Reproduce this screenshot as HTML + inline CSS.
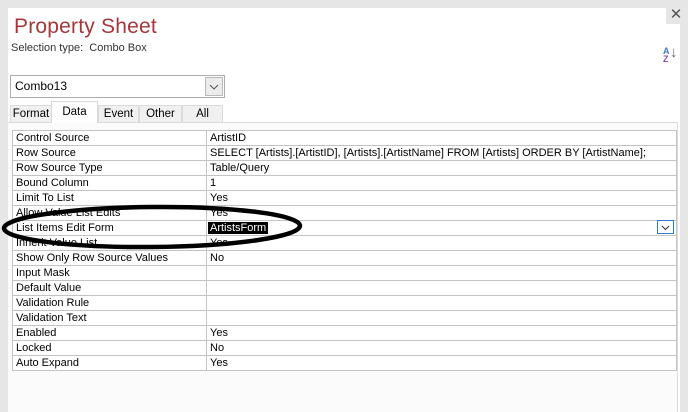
<!DOCTYPE html>
<html><head><meta charset="utf-8"><style>
*{margin:0;padding:0;box-sizing:border-box}
body{width:688px;height:412px;background:#e6e6e6;position:relative;overflow:hidden;font-family:"Liberation Sans",sans-serif;font-size:11px;color:#000}
.a{position:absolute}
#panel{left:8px;top:8px;width:672px;height:404px;background:#fff}
#close{left:666px;top:6px;width:20px;height:18px;background:#e6e6e6;font-size:15px;line-height:18px;text-align:center;color:#555}
.tab{position:absolute;top:105px;height:17px;background:#f0f0f0;border:1px solid #dadada;border-bottom:none;text-align:center;line-height:16px;font-size:11.5px}
#content{left:8px;top:122px;width:670px;height:290px;background:#fbfbfb;border-top:1px solid #dadada;border-right:1px solid #dcdcdc}
table{position:absolute;left:12px;top:130px;border-collapse:collapse;width:665px}
td{border:1px solid #c3c3c3;height:15px;padding:0 0 0 3px;line-height:13px;font-size:11px;white-space:nowrap;background:#fff}
td:first-child{width:194px}
</style></head><body>
<div id="panel" class="a"></div>
<div id="close" class="a">✕</div>
<div class="a" style="left:14px;top:15px;font-size:21px;color:#a4373a;letter-spacing:0.2px">Property Sheet</div>
<div class="a" style="left:11px;top:42px;font-size:11px;color:#333">Selection type:&nbsp; Combo Box</div>
<div class="a" style="left:663px;top:47px;font-size:9px;line-height:8px;font-weight:bold"><span style="color:#3f7ac7">A</span><br><span style="color:#8a4fb0">Z</span></div>
<div class="a" style="left:670px;top:44px;font-size:15px;color:#666">↓</div>
<div class="a" style="left:10px;top:75px;width:215px;height:23px;border:1px solid #acacac;background:#fff;padding-left:4px;line-height:20px;font-size:12px">Combo13</div>
<div class="a" style="left:205px;top:77px;width:18px;height:19px;background:#ececec;border:1px solid #b9b9b9"><svg width="16" height="17" viewBox="0 0 16 17"><path d="M4 7l4 4 4-4" stroke="#555" fill="none" stroke-width="1"/></svg></div>
<div id="content" class="a"></div>
<div class="tab" style="left:10px;width:42px">Format</div>
<div class="tab" style="left:98px;width:41px">Event</div>
<div class="tab" style="left:139px;width:43px">Other</div>
<div class="tab" style="left:182px;width:41px">All</div>
<div class="tab" style="left:51px;top:101px;height:22px;width:47px;background:#fff;line-height:20px;z-index:2">Data</div>
<table>
<tr><td>Control Source</td><td>ArtistID</td></tr>
<tr><td>Row Source</td><td>SELECT [Artists].[ArtistID], [Artists].[ArtistName] FROM [Artists] ORDER BY [ArtistName];</td></tr>
<tr><td>Row Source Type</td><td>Table/Query</td></tr>
<tr><td>Bound Column</td><td>1</td></tr>
<tr><td>Limit To List</td><td>Yes</td></tr>
<tr><td>Allow Value List Edits</td><td>Yes</td></tr>
<tr><td>List Items Edit Form</td><td style="padding-left:1px"><span style="background:#000;color:#fff;padding:0 2px">ArtistsForm</span></td></tr>
<tr><td>Inherit Value List</td><td>Yes</td></tr>
<tr><td>Show Only Row Source Values</td><td>No</td></tr>
<tr><td>Input Mask</td><td></td></tr>
<tr><td>Default Value</td><td></td></tr>
<tr><td>Validation Rule</td><td></td></tr>
<tr><td>Validation Text</td><td></td></tr>
<tr><td>Enabled</td><td>Yes</td></tr>
<tr><td>Locked</td><td>No</td></tr>
<tr><td>Auto Expand</td><td>Yes</td></tr>
</table>
<div class="a" style="left:657px;top:220px;width:17px;height:14px;border:1px solid #2b7bd6;background:#fff"><svg width="15" height="12" viewBox="0 0 15 12"><path d="M4 5l3.5 3.5L11 5" stroke="#333" fill="none" stroke-width="1"/></svg></div>
<svg class="a" style="left:0;top:0" width="688" height="412"><ellipse cx="152" cy="227" rx="148" ry="20" transform="rotate(-0.5 152 227)" fill="none" stroke="#000" stroke-width="4.5"/></svg>
</body></html>
